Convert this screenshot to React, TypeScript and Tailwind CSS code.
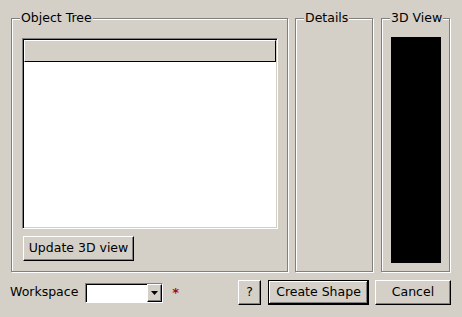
import type { ReactNode } from "react";

const raised =
  "border border-t-white border-l-white border-r-black border-b-black shadow-[inset_-1px_-1px_0_#808080] bg-[#d4d0c8]";

function Group({
  title,
  className,
  children,
}: {
  title: string;
  className: string;
  children?: ReactNode;
}) {
  return (
    <div
      className={`h-[254px] border border-[#808080] shadow-[inset_1px_1px_0_#fff,1px_1px_0_#fff] ${className}`}
    >
      <div className="-mt-[8px] ml-[8px] h-[14px] w-fit bg-[#d4d0c8] px-[1px] leading-[14px]">
        {title}
      </div>
      {children}
    </div>
  );
}

function Button({
  label,
  width,
  isDefault,
}: {
  label: string;
  width: string;
  isDefault?: boolean;
}) {
  return (
    <button
      className={`flex h-[25px] items-center justify-center leading-none text-black ${width} ${
        isDefault
          ? "border border-black bg-[#d4d0c8] shadow-[inset_-1px_-1px_0_#000,inset_1px_1px_0_#fff,inset_-2px_-2px_0_#808080]"
          : raised
      }`}
    >
      {label}
    </button>
  );
}

export default function App() {
  return (
    <div
      className="h-[317px] w-[462px] overflow-hidden bg-[#d4d0c8] pt-[18px] text-[12.5px] text-black"
      style={{ fontFamily: '"DejaVu Sans", sans-serif' }}
    >
      {/* Group boxes */}
      <div className="flex pl-[11px]">
        <Group title="Object Tree" className="w-[277px]">
          {/* Tree view */}
          <div className="ml-[10px] mt-[13px] flex h-[191px] w-[256px] flex-col border border-t-[#808080] border-l-[#808080] border-r-white border-b-white bg-white shadow-[inset_1px_1px_0_#000,inset_-1px_-1px_0_#d4d0c8]">
            <div className="ml-[1px] mr-[1px] mt-[1px] h-[22px] border border-t-white border-l-white border-r-black border-b-black bg-[#d4d0c8]" />
          </div>
          <div className="ml-[11px] mt-[7px]">
            <Button label="Update 3D view" width="w-[111px]" />
          </div>
        </Group>
        <Group title="Details" className="ml-[7px] w-[78px]" />
        <Group title="3D View" className="ml-[8px] w-[69px]">
          <div className="ml-[9px] mt-[12px] h-[226px] w-[50px] bg-black" />
        </Group>
      </div>

      {/* Bottom row */}
      <div className="mt-[8px] flex h-[25px] items-center pl-[10px] pr-[11px]">
        <span>Workspace</span>
        <div className="ml-[7px] flex h-[20px] w-[78px] border border-t-[#808080] border-l-[#808080] border-r-white border-b-white bg-white shadow-[inset_1px_1px_0_#000]">
          <div className="flex-1" />
          <div
            className={`flex h-full w-[15px] items-center justify-center ${raised}`}
          >
            <svg width="7" height="4" viewBox="0 0 7 4">
              <polygon points="0,0 7,0 3.5,4" fill="#000" />
            </svg>
          </div>
        </div>
        <span className="ml-[9px] text-[13px] font-bold text-[#a01010]">*</span>
        <div className="ml-auto flex items-center">
          <Button label="?" width="w-[23px]" />
          <div className="ml-[7px]">
            <Button label="Create Shape" width="w-[101px]" isDefault />
          </div>
          <div className="ml-[6px]">
            <Button label="Cancel" width="w-[76px]" />
          </div>
        </div>
      </div>
    </div>
  );
}
